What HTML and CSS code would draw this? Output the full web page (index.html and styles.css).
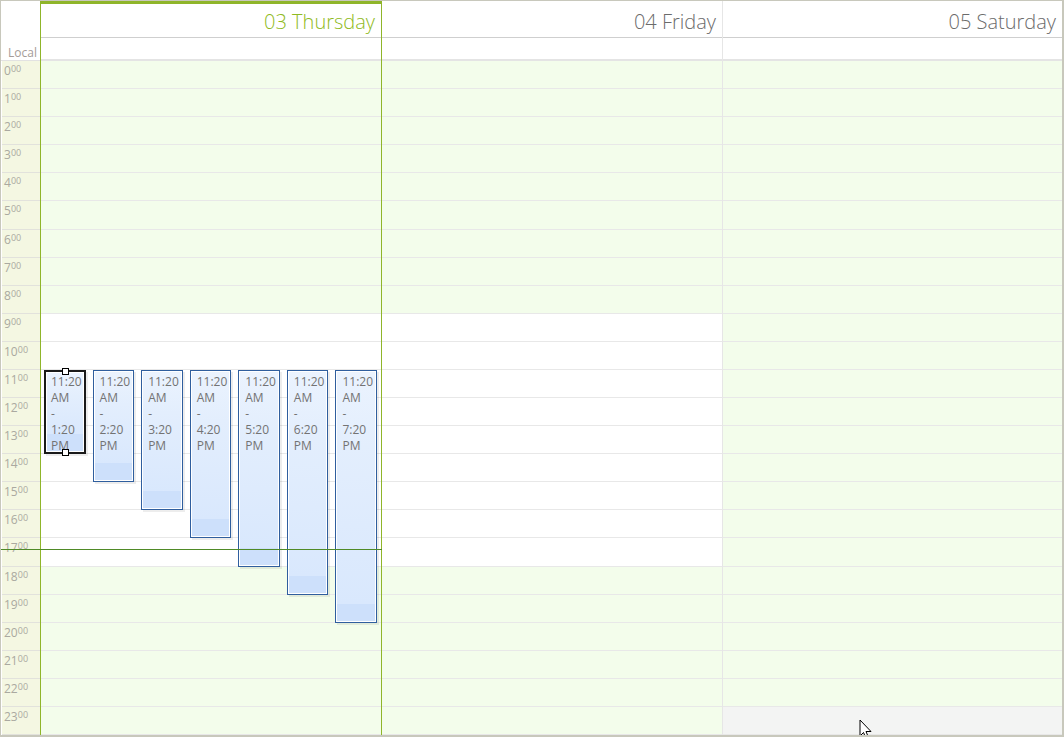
FILE: index.html
```html
<!DOCTYPE html>
<html>
<head>
<meta charset="utf-8">
<link rel="stylesheet" href="styles.css">
</head>
<body>
<div class="scheduler">
  <div class="col timecol">
    <div class="time-head"><span class="local">Local</span></div>
    <div class="rows">
      <div class="tcell">0<sup>00</sup></div>
      <div class="tcell">1<sup>00</sup></div>
      <div class="tcell">2<sup>00</sup></div>
      <div class="tcell">3<sup>00</sup></div>
      <div class="tcell">4<sup>00</sup></div>
      <div class="tcell">5<sup>00</sup></div>
      <div class="tcell">6<sup>00</sup></div>
      <div class="tcell">7<sup>00</sup></div>
      <div class="tcell">8<sup>00</sup></div>
      <div class="tcell">9<sup>00</sup></div>
      <div class="tcell">10<sup>00</sup></div>
      <div class="tcell">11<sup>00</sup></div>
      <div class="tcell">12<sup>00</sup></div>
      <div class="tcell">13<sup>00</sup></div>
      <div class="tcell">14<sup>00</sup></div>
      <div class="tcell">15<sup>00</sup></div>
      <div class="tcell">16<sup>00</sup></div>
      <div class="tcell">17<sup>00</sup></div>
      <div class="tcell">18<sup>00</sup></div>
      <div class="tcell">19<sup>00</sup></div>
      <div class="tcell">20<sup>00</sup></div>
      <div class="tcell">21<sup>00</sup></div>
      <div class="tcell">22<sup>00</sup></div>
      <div class="tcell">23<sup>00</sup></div>
    </div>
  </div>

  <div class="col day today">
    <div class="day-head">03 Thursday</div>
    <div class="allday"></div>
    <div class="rows appgrid">
      <div class="cell off" style="grid-row:1"></div>
      <div class="cell off" style="grid-row:2"></div>
      <div class="cell off" style="grid-row:3"></div>
      <div class="cell off" style="grid-row:4"></div>
      <div class="cell off" style="grid-row:5"></div>
      <div class="cell off" style="grid-row:6"></div>
      <div class="cell off" style="grid-row:7"></div>
      <div class="cell off" style="grid-row:8"></div>
      <div class="cell off" style="grid-row:9"></div>
      <div class="cell" style="grid-row:10"></div>
      <div class="cell" style="grid-row:11"></div>
      <div class="cell" style="grid-row:12"></div>
      <div class="cell" style="grid-row:13"></div>
      <div class="cell" style="grid-row:14"></div>
      <div class="cell" style="grid-row:15"></div>
      <div class="cell" style="grid-row:16"></div>
      <div class="cell" style="grid-row:17"></div>
      <div class="cell" style="grid-row:18"></div>
      <div class="cell off" style="grid-row:19"></div>
      <div class="cell off" style="grid-row:20"></div>
      <div class="cell off" style="grid-row:21"></div>
      <div class="cell off" style="grid-row:22"></div>
      <div class="cell off" style="grid-row:23"></div>
      <div class="cell off" style="grid-row:24"></div>

      <div class="appt selected" style="grid-column:1;grid-row:12 / 15"><span>11:20</span><span>AM</span><span>-</span><span>1:20</span><span>PM</span><i class="handle top"></i><i class="handle bottom"></i></div>
      <div class="appt" style="grid-column:2;grid-row:12 / 16"><span>11:20</span><span>AM</span><span>-</span><span>2:20</span><span>PM</span></div>
      <div class="appt" style="grid-column:3;grid-row:12 / 17"><span>11:20</span><span>AM</span><span>-</span><span>3:20</span><span>PM</span></div>
      <div class="appt" style="grid-column:4;grid-row:12 / 18"><span>11:20</span><span>AM</span><span>-</span><span>4:20</span><span>PM</span></div>
      <div class="appt" style="grid-column:5;grid-row:12 / 19"><span>11:20</span><span>AM</span><span>-</span><span>5:20</span><span>PM</span></div>
      <div class="appt" style="grid-column:6;grid-row:12 / 20"><span>11:20</span><span>AM</span><span>-</span><span>6:20</span><span>PM</span></div>
      <div class="appt" style="grid-column:7;grid-row:12 / 21"><span>11:20</span><span>AM</span><span>-</span><span>7:20</span><span>PM</span></div>
    </div>
  </div>

  <div class="col day">
    <div class="day-head">04 Friday</div>
    <div class="allday"></div>
    <div class="rows">
      <div class="cell off"></div><div class="cell off"></div><div class="cell off"></div>
      <div class="cell off"></div><div class="cell off"></div><div class="cell off"></div>
      <div class="cell off"></div><div class="cell off"></div><div class="cell off"></div>
      <div class="cell"></div><div class="cell"></div><div class="cell"></div>
      <div class="cell"></div><div class="cell"></div><div class="cell"></div>
      <div class="cell"></div><div class="cell"></div><div class="cell"></div>
      <div class="cell off"></div><div class="cell off"></div><div class="cell off"></div>
      <div class="cell off"></div><div class="cell off"></div><div class="cell off"></div>
    </div>
  </div>

  <div class="col day last">
    <div class="day-head">05 Saturday</div>
    <div class="allday"></div>
    <div class="rows">
      <div class="cell off"></div><div class="cell off"></div><div class="cell off"></div>
      <div class="cell off"></div><div class="cell off"></div><div class="cell off"></div>
      <div class="cell off"></div><div class="cell off"></div><div class="cell off"></div>
      <div class="cell off"></div><div class="cell off"></div><div class="cell off"></div>
      <div class="cell off"></div><div class="cell off"></div><div class="cell off"></div>
      <div class="cell off"></div><div class="cell off"></div><div class="cell off"></div>
      <div class="cell off"></div><div class="cell off"></div><div class="cell off"></div>
      <div class="cell off"></div><div class="cell off"></div><div class="cell hover"></div>
    </div>
  </div>

  <div class="now-line"></div>
  <svg class="cursor" width="14" height="22" viewBox="0 0 14 22"><path d="M1 1 L1 17 L4.5 13.5 L7 19.5 L9.5 18.5 L7 12.5 L12 12.5 Z" fill="#fff" stroke="#000" stroke-width="1" stroke-linejoin="miter"/></svg>
</div>
</body>
</html>
```

FILE: styles.css
```css
html, body {
  margin: 0;
  padding: 0;
  background: #fff;
}

.scheduler {
  position: relative;
  width: 1064px;
  height: 737px;
  box-sizing: border-box;
  border-style: solid;
  border-color: #c8c8bc;
  border-width: 1px 2px 2px 1px;
  display: grid;
  grid-template-columns: 40px 341px 341px 339px;
  overflow: hidden;
  font-family: "Open Sans", "Noto Sans", sans-serif;
}

.col {
  display: flex;
  flex-direction: column;
  box-sizing: border-box;
  min-width: 0;
}

.timecol {
  border-right: 1px solid #8fb52a;
  background: #fff;
}

.time-head {
  height: 60px;
  box-sizing: border-box;
  border-bottom: 1px solid #e2e2e2;
  display: flex;
  align-items: flex-end;
  justify-content: flex-end;
  padding: 0 3px 0 0;
}

.local {
  font-size: 12px;
  color: #a59c98;
  line-height: 15px;
}

.rows {
  height: 674px;
  display: grid;
  grid-template-rows: repeat(24, 1fr);
}

.tcell {
  background: #f4f7e2;
  border-bottom: 1px solid #e2e2dc;
  margin-left: 1px;
  font-size: 12px;
  line-height: 14px;
  color: #aaa9a0;
  padding: 3px 0 0 2px;
  box-sizing: border-box;
  min-height: 0;
}

.tcell sup {
  font-size: 9px;
  vertical-align: 0;
  position: relative;
  top: -3px;
}

.day {
  border-right: 1px solid #e6e6e6;
}

.day.last {
  border-right: none;
}

.day.today {
  border-right: 1px solid #8fb52a;
}

.day-head {
  height: 37px;
  box-sizing: border-box;
  border-top: 3px solid #fff;
  border-bottom: 1px solid #cfcfcf;
  text-align: right;
  font-size: 20px;
  font-weight: 300;
  line-height: 26px;
  padding: 5px 6px 0 0;
  color: #6b6b6b;
  white-space: nowrap;
}

.today .day-head {
  border-top-color: #8fb52a;
  color: #8fba22;
}

.allday {
  height: 23px;
  box-sizing: border-box;
  border-bottom: 2px solid #e4e4e4;
  background: #fff;
}

.cell {
  background: #fff;
  border-bottom: 1px solid #e8e8e8;
  box-sizing: border-box;
  min-height: 0;
}

.cell.off {
  background: #f3fdeb;
}

.cell.hover {
  background: #f3f4f3;
}

.appgrid {
  grid-template-columns: repeat(7, 1fr);
}

.appgrid .cell {
  grid-column: 1 / -1;
}

.appt {
  position: relative;
  margin: 0 4px 0 3px;
  box-sizing: border-box;
  border: 1px solid #2f5e9e;
  box-shadow: inset 0 0 0 1px #fff, 2px 2px 0 rgba(0, 0, 0, 0.07);
  background: linear-gradient(to bottom, #ebf3fe 0%, #e3eefd 30%, #d9e8fd calc(100% - 18px), #cde0fb calc(100% - 18px), #cde0fb 100%);
  padding: 3px 0 0 6px;
  font-size: 12px;
  line-height: 16px;
  color: #737373;
  z-index: 1;
  min-width: 0;
  overflow: visible;
}

.appt span {
  display: block;
  white-space: nowrap;
}

.appt.selected {
  border: 2px solid #1a1a1a;
  padding: 2px 0 0 5px;
}

.handle {
  position: absolute;
  left: 50%;
  width: 5px;
  height: 5px;
  margin-left: -3px;
  background: #fff;
  border: 1px solid #000;
}

.handle.top {
  top: -4px;
}

.handle.bottom {
  bottom: -4px;
}

.now-line {
  position: absolute;
  left: 0;
  top: 548px;
  width: 381px;
  height: 1px;
  background: #4f8a26;
  z-index: 2;
}

.cursor {
  position: absolute;
  left: 858px;
  top: 718px;
  z-index: 3;
}
```
